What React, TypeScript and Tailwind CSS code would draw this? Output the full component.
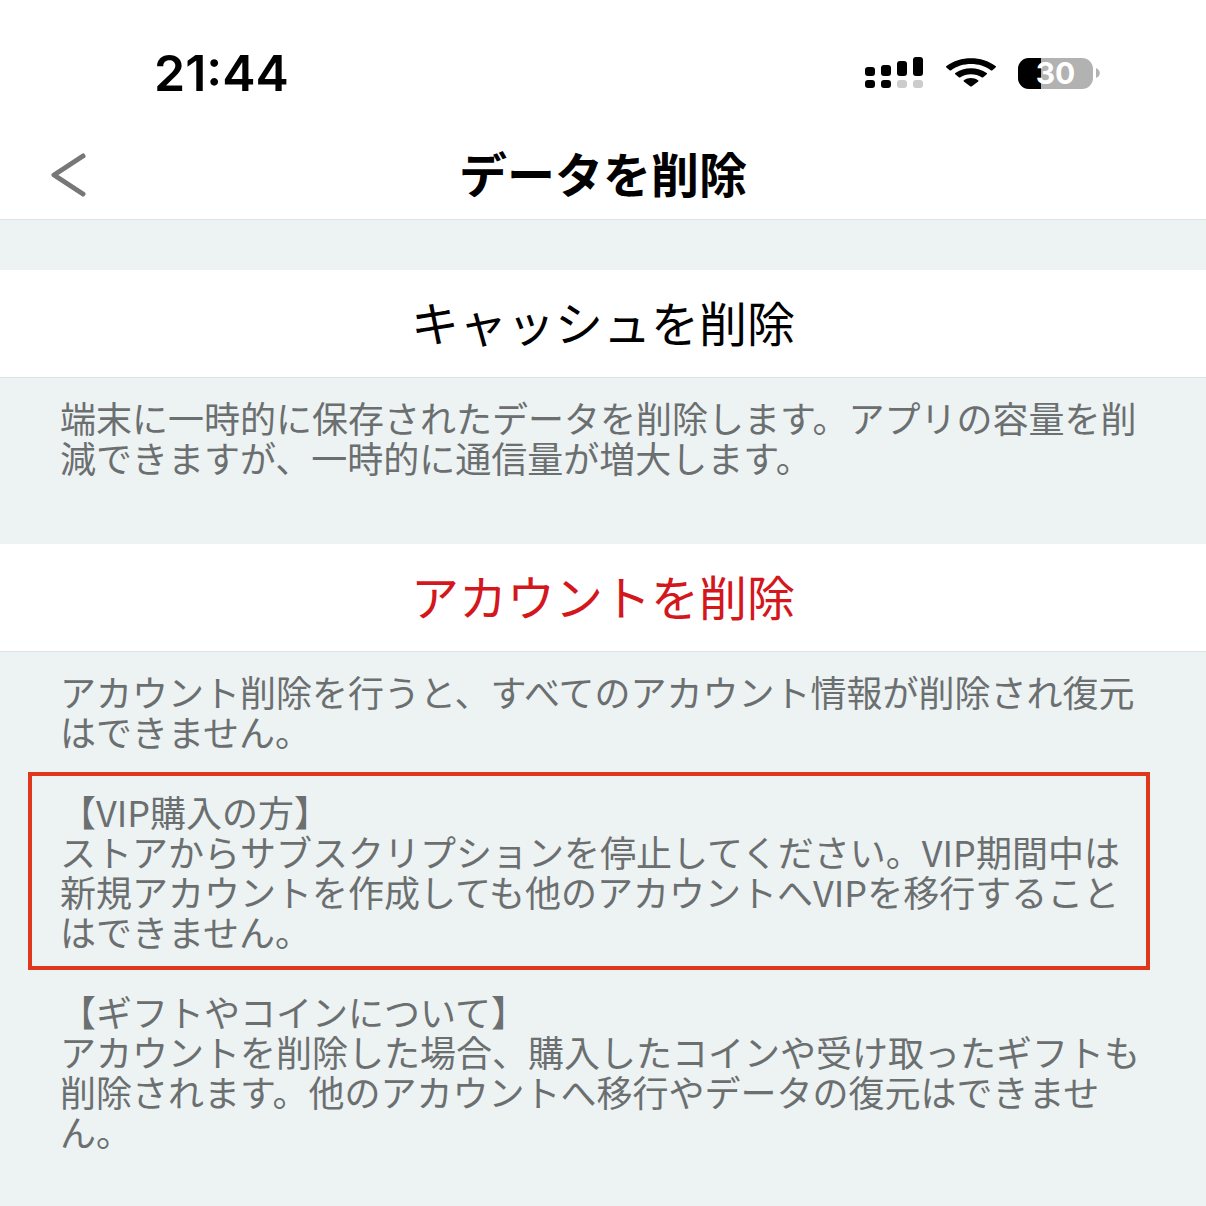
const Signal = (): JSX.Element => (
    <svg width="60" height="32" viewBox="0 0 60 32" aria-hidden="true">
        <rect x="1" y="10" width="10" height="9" rx="3" />
        <rect x="17" y="8" width="10" height="11" rx="3" />
        <rect x="33" y="4" width="10" height="15" rx="3" />
        <rect x="49" y="0" width="10" height="19" rx="3" />
        <rect x="1" y="23" width="10" height="8" rx="3" />
        <rect x="17" y="23" width="10" height="8" rx="3" />
        <rect x="33" y="23" width="10" height="8" rx="3" fill="#cccccc" />
        <rect x="49" y="23" width="10" height="8" rx="3" fill="#cccccc" />
    </svg>
)

const Wifi = (): JSX.Element => (
    <svg width="52" height="30" viewBox="0 0 52 30" aria-hidden="true">
        <path d="M1.4 9.4Q.6 8.7 1.5 8C15 -2.4 37 -2.4 50.5 8Q51.4 8.7 50.6 9.4L47.4 12.2Q46.6 12.8 45.8 12.2C35 4 17 4 6.2 12.2Q5.4 12.8 4.6 12.2Z" />
        <path d="M10.2 16.2Q9.6 15.6 10.3 15C19 8.6 33 8.6 41.7 15Q42.4 15.6 41.8 16.2L38.2 19.3Q37.4 19.8 36.6 19.3C31 15.2 21 15.2 15.4 19.3Q14.6 19.8 13.8 19.3Z" />
        <path d="M18.8 23.4Q18.2 22.8 18.9 22.3C23 19.3 29 19.3 33.1 22.3Q33.8 22.8 33.2 23.4L26.9 28.3Q26 28.9 25.1 28.3Z" />
    </svg>
)

const Battery = ({ level }: { level: number }): JSX.Element => (
    <div className="flex items-center gap-[3px]">
        <div className="relative flex h-[31px] w-[75px] items-center justify-center rounded-[11px] bg-[#b2b2b2]">
            <div className="absolute inset-y-0 left-0 rounded-l-[11px] bg-black" style={{ width: `${level}%` }} />
            <span className="relative text-[30px] leading-none font-bold text-white">{level}</span>
        </div>
        <svg width="4" height="10" viewBox="0 0 4 10" fill="#b2b2b2" aria-hidden="true">
            <path d="M0 0C5 2 5 8 0 10Z" />
        </svg>
    </div>
)

const Action = ({ label, danger = false }: { label: string, danger?: boolean }): JSX.Element => (
    <button
        type="button"
        className={danger
            ? 'block h-[108px] w-full border-b border-[#dde2e3] bg-white pb-1.5 text-center text-[48px] leading-[60px] text-[#d3171c]'
            : 'block h-[108px] w-full border-b border-[#dde2e3] bg-white pb-1.5 text-center text-[48px] leading-[60px] text-black'}
    >
        {label}
    </button>
)

const App = (): JSX.Element => {
    return (
        <div lang="ja" className="min-h-screen bg-[#edf2f3] font-['Noto_Sans_CJK_JP',sans-serif]">
            <header className="border-b border-[#dde2e3] bg-white">
                <div className="flex h-[130px] items-center justify-between pt-4 pr-[106px] pl-[154px] font-['Inter',sans-serif]">
                    <time className="text-[50px] leading-none font-semibold text-black">21:44</time>
                    <div className="flex items-center gap-[21px]">
                        <Signal />
                        <Wifi />
                        <Battery level={30} />
                    </div>
                </div>
                <div className="grid h-[89px] grid-cols-[1fr_auto_1fr] items-center px-12">
                    <button type="button" aria-label="戻る" className="justify-self-start">
                        <svg width="40" height="46" viewBox="0 0 40 46" fill="none" stroke="#777777" strokeWidth="5" strokeLinecap="round" strokeLinejoin="round" aria-hidden="true">
                            <path d="M35 4L6 23L35 42" />
                        </svg>
                    </button>
                    <h1 className="pb-1.5 text-[48px] leading-[60px] font-bold text-black">データを削除</h1>
                </div>
            </header>
            <main className="pt-[50px] text-[36px] leading-10 text-[#6b6f70]">
                <Action label="キャッシュを削除" />
                <p className="px-[60px] pt-[19px] pb-[67px]">
                    端末に一時的に保存されたデータを削除します。アプリの容量を削減できますが、一時的に通信量が増大します。
                </p>
                <Action label="アカウントを削除" danger />
                <div className="px-[60px] pt-[19px] pb-12">
                    <p>アカウント削除を行うと、すべてのアカウント情報が削除され復元はできません。</p>
                    <section className="mt-[21px] -mr-1 -ml-8 border-4 border-[#df371c] py-[15px] pl-7">
                        <h2>【VIP購入の方】</h2>
                        <p>ストアからサブスクリプションを停止してください。VIP期間中は新規アカウントを作成しても他のアカウントへVIPを移行することはできません。</p>
                    </section>
                    <section className="mt-[21px]">
                        <h2>【ギフトやコインについて】</h2>
                        <p>アカウントを削除した場合、購入したコインや受け取ったギフトも削除されます。他のアカウントへ移行やデータの復元はできません。</p>
                    </section>
                </div>
            </main>
        </div>
    )
}

export default App
